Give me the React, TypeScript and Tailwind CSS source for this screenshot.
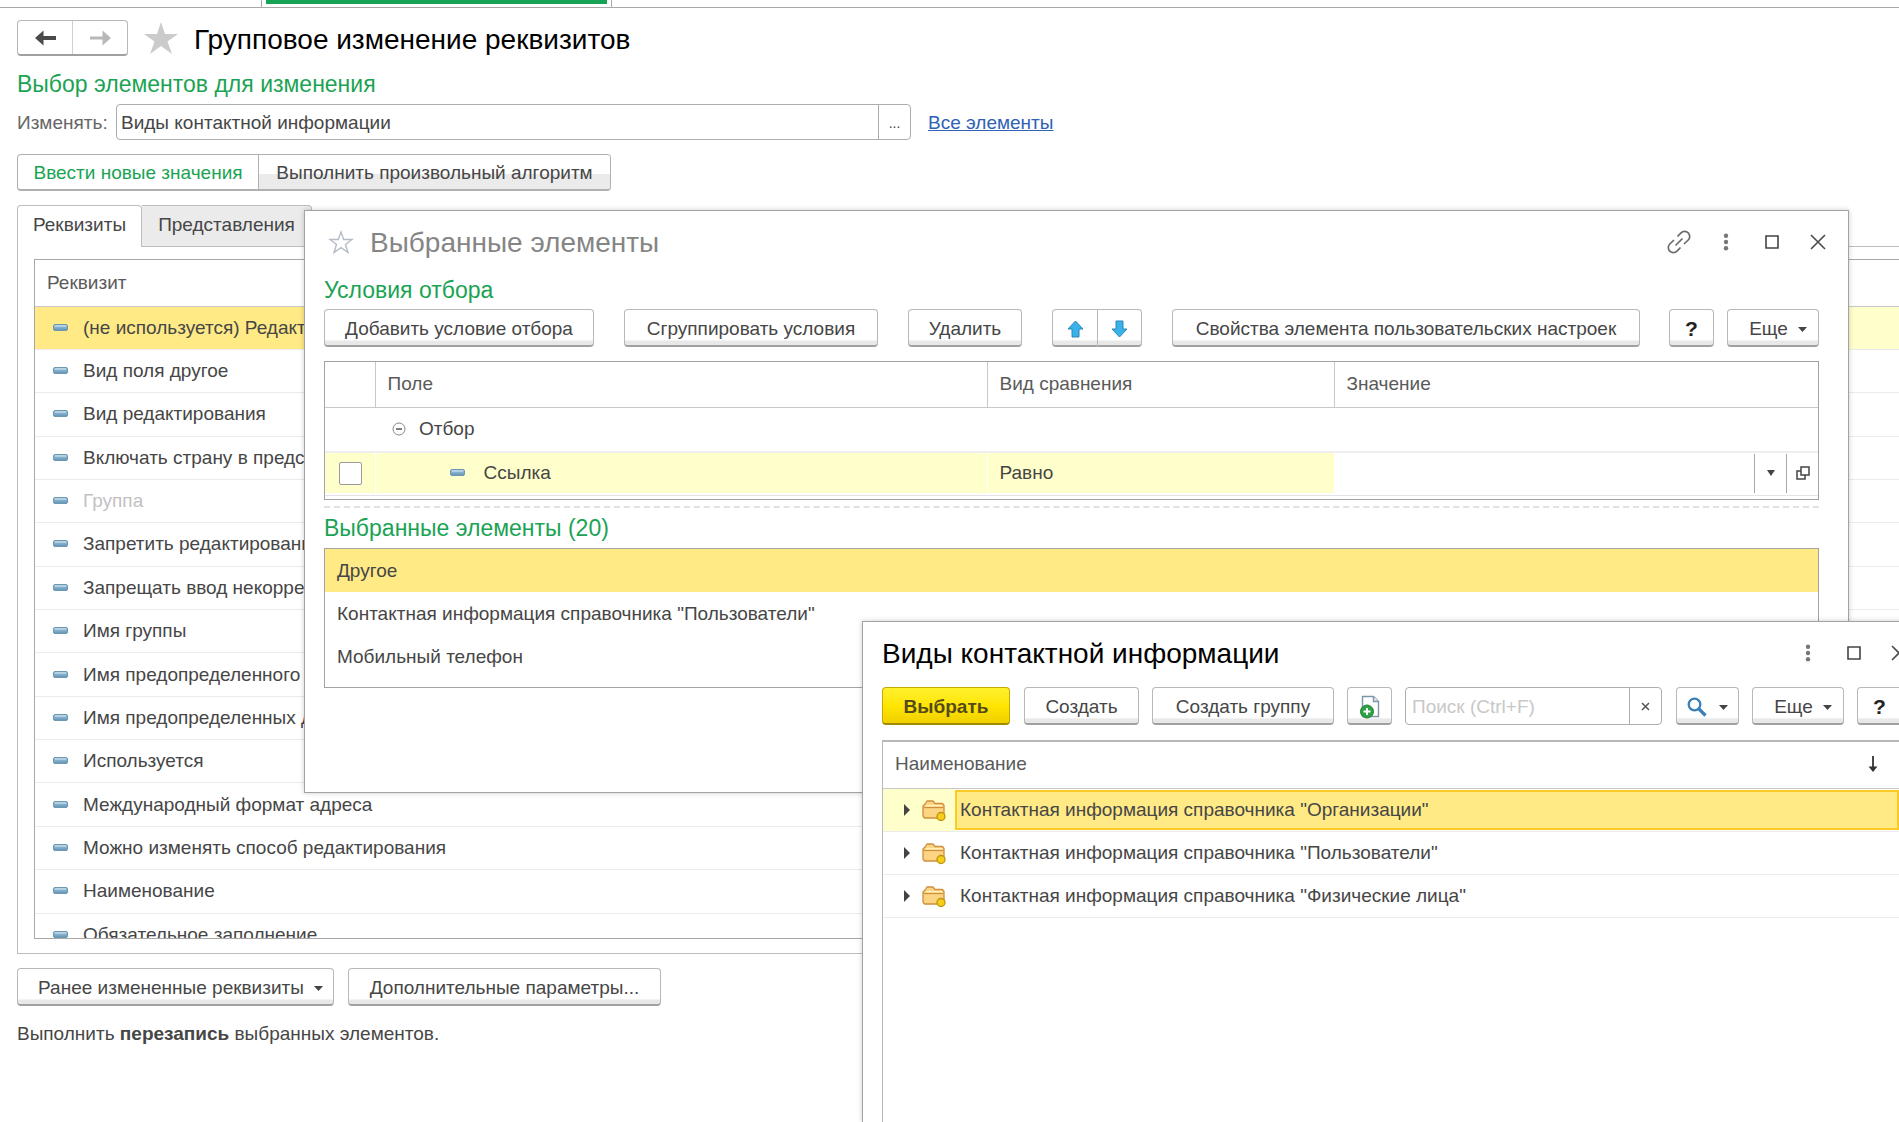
import type { ReactNode } from "react";

function Dash() {
  return (
    <svg width="15" height="8" viewBox="0 0 15 8" className="shrink-0">
      <defs>
        <linearGradient id="dash" x1="0" y1="0" x2="0" y2="1">
          <stop offset="0" stopColor="#a9cbe2" />
          <stop offset="1" stopColor="#5f93b4" />
        </linearGradient>
      </defs>
      <rect x="0.5" y="0.5" width="14" height="6" rx="1.5" fill="url(#dash)" stroke="#6e97b0" />
      <path d="M2 2h11" stroke="#cfe3ef" />
    </svg>
  );
}

function Caret() {
  return (
    <svg width="9" height="5" viewBox="0 0 9 5" className="mt-0.5 shrink-0">
      <path d="M0 0h9L4.500 5z" fill="#444" />
    </svg>
  );
}

function Folder() {
  return (
    <svg width="24" height="24" viewBox="0 0 24 24" className="shrink-0">
      <path d="M1 18V8l2.500-2.500L5 3h6l2 2.500h7.500L22 7.500V18l-1.500 2h-18z" fill="#fcd584" stroke="#cf8f3c" strokeWidth="1.300" strokeLinejoin="round" />
      <path d="M1.500 9.500h20" stroke="#cf8f3c" strokeWidth="1.300" />
      <path d="M3.500 7.700h17" stroke="#fff0b8" strokeWidth="1.500" fill="none" />
      <circle cx="19" cy="18.500" r="4" fill="#f7cd1b" stroke="#bd9215" strokeWidth="1.300" />
    </svg>
  );
}

function Close() {
  return (
    <svg width="16" height="16" viewBox="0 0 16 16">
      <path d="M1 1l14 14M15 1L1 15" stroke="#4a4a4a" strokeWidth="1.600" />
    </svg>
  );
}

function Dots() {
  return (
    <svg width="6" height="18" viewBox="0 0 6 18">
      <circle cx="3" cy="2.800" r="2.200" fill="#777" />
      <circle cx="3" cy="9" r="2.200" fill="#777" />
      <circle cx="3" cy="15.200" r="2.200" fill="#777" />
    </svg>
  );
}

function Maximize() {
  return (
    <svg width="14" height="14" viewBox="0 0 14 14">
      <path d="M1 1h12v12H1z" fill="none" stroke="#444" strokeWidth="1.600" />
    </svg>
  );
}

function Btn({ children, className = "", label }: { children: ReactNode; className?: string; label?: string }) {
  return (
    <button
      type="button"
      aria-label={label}
      className={
        "flex h-[38px] shrink-0 items-center justify-center rounded border border-b-2 border-[#b8b8b8] border-b-[#a0a0a0] bg-linear-to-b from-white from-84% to-[#e8e8e8] to-90% pt-0.5 whitespace-nowrap " +
        className
      }
    >
      {children}
    </button>
  );
}

const attributes = [
  "(не используется) Редактирование только в диалоге",
  "Вид поля другое",
  "Вид редактирования",
  "Включать страну в представление",
  "Группа",
  "Запретить редактирование пользователем",
  "Запрещать ввод некорректных",
  "Имя группы",
  "Имя предопределенного вида",
  "Имя предопределенных данных",
  "Используется",
  "Международный формат адреса",
  "Можно изменять способ редактирования",
  "Наименование",
  "Обязательное заполнение",
];

const kinds = ["Организации", "Пользователи", "Физические лица"];

function MainPage() {
  return (
    <main>
      <div className="flex h-2 border-b border-[#a8a8a8] pl-[261px]">
        <div className="h-[7px] w-[351px] border-x border-[#a8a8a8] px-1">
          <div className="h-1 bg-[#17a355]" />
        </div>
      </div>
      <div className="pl-[17px]">
        <header className="mt-3 flex h-9 items-center">
          <div className="flex h-9 w-[111px] rounded border border-b-2 border-[#b8b8b8] border-b-[#a0a0a0]">
            <button type="button" aria-label="Назад" className="flex flex-1 items-center justify-center border-r border-[#d0d0d0]">
              <svg width="21" height="16" viewBox="0 0 21 16">
                <path d="M0 8l8.500-7.500V6H21v4H8.500v5.500z" fill="#4a4a4a" />
              </svg>
            </button>
            <button type="button" aria-label="Вперед" className="flex flex-1 items-center justify-center">
              <svg width="21" height="16" viewBox="0 0 21 16">
                <path d="M21 8l-8.500-7.500v6H0v3h12.500v6z" fill="#b8b8b8" />
              </svg>
            </button>
          </div>
          <svg width="34" height="32" viewBox="0 0 34 32" className="ml-4">
            <path d="M17 0l4 12h13L23.500 19.500 28 32l-11-8-11 8 4.500-12.500L0 12h13z" fill="#cbcbcb" />
          </svg>
          <h1 className="ml-4 pt-1 text-[28px] text-black">Групповое изменение реквизитов</h1>
        </header>
        <h2 className="mt-2.5 mb-0.5 text-[23px] leading-9 text-[#1ba354]">Выбор элементов для изменения</h2>
        <div className="flex h-9 items-center">
          <label htmlFor="kind" className="w-[99px] pt-0.5 text-[#666]">Изменять:</label>
          <div className="flex h-9 w-[795px] rounded border border-[#adadad]">
            <input id="kind" defaultValue="Виды контактной информации" className="min-w-0 flex-1 px-1 pt-0.5 outline-none" />
            <button type="button" className="w-8 border-l border-[#adadad] pt-0.5 text-sm">...</button>
          </div>
          <a href="#all" className="ml-[17px] pt-0.5 text-[#2f62b5] underline">Все элементы</a>
        </div>
        <div className="mt-[14px] flex h-[37px] w-[594px] overflow-hidden rounded border border-b-2 border-[#b0b0b0]">
          <button type="button" className="w-[241px] border-r border-[#b0b0b0] pt-0.5 text-[#1ba354]">Ввести новые значения</button>
          <button type="button" className="flex-1 bg-linear-to-b from-white from-55% to-[#ebebeb] to-55% pt-0.5">Выполнить произвольный алгоритм</button>
        </div>
        <div role="tablist" className="mt-[14px] flex h-[42px] items-start">
          <button type="button" role="tab" aria-selected="true" className="h-[42px] w-[125px] rounded-t border border-b-0 border-[#bdbdbd] bg-white pb-1">Реквизиты</button>
          <button type="button" role="tab" aria-selected="false" className="h-[42px] w-[170px] rounded-tr border border-l-0 border-[#bdbdbd] bg-[#ebebeb] pb-0.5">Представления</button>
          <div className="h-[42px] flex-1 border-b border-[#bdbdbd]" />
        </div>
        <div className="border-b border-l border-[#bdbdbd] pt-3 pb-[14px] pl-4">
          <div className="h-[680px] overflow-hidden border border-r-0 border-[#a8a8a8]">
            <table className="h-[697px] w-full table-fixed border-collapse text-left">
              <thead>
                <tr className="h-[46px]">
                  <th className="w-[60%] border-b border-[#c8c8c8] pl-3 font-normal text-[#5a5a5a]">Реквизит</th>
                  <th className="border-b border-[#c8c8c8]" aria-label="Новое значение" />
                </tr>
              </thead>
              <tbody>
                {attributes.map((name, i) => (
                  <tr key={name} className="border-b border-[#ebebeb]">
                    <td className={i === 0 ? "bg-[#ffea86] p-0" : i === 4 ? "p-0 text-[#c4c0c4]" : "p-0"}>
                      <div className="flex items-center gap-[15px] pl-[18px] whitespace-nowrap">
                        <Dash />
                        {name}
                      </div>
                    </td>
                    <td className={i === 0 ? "bg-[#ffffcc] p-0" : "p-0"} />
                  </tr>
                ))}
              </tbody>
            </table>
          </div>
        </div>
        <div className="mt-[14px] flex gap-[14px]">
          <Btn className="w-[317px] gap-2.5 pl-2.5">Ранее измененные реквизиты <Caret /></Btn>
          <Btn className="w-[313px]">Дополнительные параметры...</Btn>
        </div>
        <p className="mt-3 leading-8">Выполнить <b>перезапись</b> выбранных элементов.</p>
      </div>
    </main>
  );
}

function SelectedDialog() {
  return (
    <section role="dialog" aria-label="Выбранные элементы" className="absolute top-[210px] right-[50px] left-[304px] h-[583px] border border-[#a3a3a3] bg-white pr-[29px] pl-[19px] shadow-[0_0_5px_rgba(0,0,0,0.2)]">
      <header className="flex h-[61px] items-center">
        <svg width="26" height="24" viewBox="0 0 26 24" className="ml-1">
          <path d="M13 2l2.700 7.500H24l-6.500 5 2.500 8-7-4.800-7 4.800 2.500-8L2 9.500h8.300z" fill="none" stroke="#b5bcc6" strokeWidth="1.400" />
        </svg>
        <h2 className="ml-4 flex-1 pt-0.5 text-[28px] text-[#858585]">Выбранные элементы</h2>
        <div className="-mr-[7px] flex items-center">
          <button type="button" aria-label="Ссылка">
            <svg width="24" height="24" viewBox="0 0 24 24" fill="none" stroke="#6a6a6a" strokeWidth="1.700">
              <path d="M10.500 6.500l3.500-3.700a5 5 0 0 1 7.200 7.200L17 14M13.500 17.500L10 21.200A5 5 0 0 1 2.800 14L7 10M8.500 15.500l7-7" />
            </svg>
          </button>
          <button type="button" aria-label="Меню" className="ml-8"><Dots /></button>
          <button type="button" aria-label="Развернуть" className="ml-9"><Maximize /></button>
          <button type="button" aria-label="Закрыть" className="ml-[31px]"><Close /></button>
        </div>
      </header>
      <h3 className="mb-px text-[23px] leading-9 text-[#1ba354]">Условия отбора</h3>
      <div className="flex">
        <Btn className="w-[270px]">Добавить условие отбора</Btn>
        <Btn className="ml-[30px] w-[254px]">Сгруппировать условия</Btn>
        <Btn className="ml-[30px] w-[114px]">Удалить</Btn>
        <Btn className="ml-[30px] w-[46px] rounded-r-none" label="Вверх">
          <svg width="17" height="18" viewBox="0 0 17 18"><path d="M8.500 1l7.500 8h-4v8H5V9H1z" fill="#38b3ea" stroke="#2e84b5" /></svg>
        </Btn>
        <Btn className="w-[44px] rounded-l-none border-l-0" label="Вниз">
          <svg width="17" height="18" viewBox="0 0 17 18"><path d="M8.500 17L1 9h4V1h7v8h4z" fill="#38b3ea" stroke="#2e84b5" /></svg>
        </Btn>
        <Btn className="ml-[30px] w-[468px]">Свойства элемента пользовательских настроек</Btn>
        <Btn className="ml-auto w-[45px] text-[21px] font-bold text-[#222]">?</Btn>
        <Btn className="ml-[13px] w-[92px] gap-2.5 pl-2.5">Еще <Caret /></Btn>
      </div>
      <div className="mt-[14px] h-[139px] border border-[#a3a3a3]">
        <table className="w-full table-fixed border-collapse text-left">
          <colgroup>
            <col className="w-[50px]" />
            <col className="w-[612px]" />
            <col className="w-[347px]" />
            <col />
          </colgroup>
          <thead>
            <tr className="h-[45px] border-b border-[#c8c8c8] text-[#5a5a5a]">
              <th className="border-r border-[#c8c8c8]" aria-label="Отметка" />
              <th className="border-r border-[#c8c8c8] pl-3 font-normal">Поле</th>
              <th className="border-r border-[#c8c8c8] pl-3 font-normal">Вид сравнения</th>
              <th className="pl-3 font-normal">Значение</th>
            </tr>
          </thead>
          <tbody>
            <tr className="h-[45px] border-b-2 border-[#efefef]">
              <td />
              <td colSpan={3} className="p-0">
                <div className="flex items-center gap-[13px] pl-[17px]">
                  <svg width="14" height="14" viewBox="0 0 14 14"><circle cx="7" cy="7" r="6" fill="none" stroke="#888" /><path d="M4 7h6" stroke="#555" strokeWidth="1.500" /></svg>
                  Отбор
                </div>
              </td>
            </tr>
            <tr className="h-[41px] bg-[#ffffcc]">
              <td className="border-r border-white p-0">
                <input type="checkbox" aria-label="Использовать условие" className="ml-[14px] block h-[23px] w-[23px] appearance-none rounded-xs border border-[#9a9a9a] bg-white" />
              </td>
              <td className="border-r border-white p-0">
                <div className="flex items-center gap-[19px] pl-[74px]"><Dash />Ссылка</div>
              </td>
              <td className="border-r border-white p-0 pl-3">Равно</td>
              <td className="bg-white p-0">
                <div className="flex h-[39px]">
                  <input aria-label="Значение" className="min-w-0 flex-1 px-3 outline-none" />
                  <button type="button" aria-label="Список" className="flex w-8 items-center justify-center border-l border-[#a8a8a8]">
                    <svg width="8" height="6" viewBox="0 0 8 6"><path d="M0 0h8L4 6z" fill="#444" /></svg>
                  </button>
                  <button type="button" aria-label="Открыть" className="flex w-8 items-center justify-center border-l border-[#a8a8a8]">
                    <svg width="14" height="14" viewBox="0 0 14 14" fill="none" stroke="#444" strokeWidth="1.500"><path d="M5 1h8v8H5zM5 5H1v8h8V9" /></svg>
                  </button>
                </div>
              </td>
            </tr>
          </tbody>
        </table>
        <div className="mt-0.5 border-t border-[#e4e4e4]" />
      </div>
      <div className="mt-1.5 border-t-2 border-dashed border-[#e2e2e2]" />
      <h3 className="mt-0.5 text-[23px] leading-9 text-[#1ba354]">Выбранные элементы (20)</h3>
      <ul className="mt-0.5 h-[140px] border border-[#a3a3a3]">
        <li className="flex h-[43px] items-center bg-[#ffea86] pl-3">Другое</li>
        <li className="flex h-[43px] items-center pl-3">Контактная информация справочника "Пользователи"</li>
        <li className="flex h-[43px] items-center pl-3">Мобильный телефон</li>
      </ul>
    </section>
  );
}

function KindsDialog() {
  return (
    <section role="dialog" aria-label="Виды контактной информации" className="absolute top-[621px] -right-5 bottom-0 left-[862px] flex flex-col border-t border-l border-[#a3a3a3] bg-white pl-[19px] shadow-[0_0_5px_rgba(0,0,0,0.2)]">
      <header className="flex h-[65px] shrink-0 items-center pr-3 pb-1">
        <h2 className="flex-1 pt-0.5 text-[28px] text-black">Виды контактной информации</h2>
        <button type="button" aria-label="Меню"><Dots /></button>
        <button type="button" aria-label="Развернуть" className="ml-9"><Maximize /></button>
        <button type="button" aria-label="Закрыть" className="ml-[30px]"><Close /></button>
      </header>
      <div className="flex shrink-0">
        <button type="button" className="h-[38px] w-[128px] rounded border border-b-2 border-[#c5a800] border-b-[#a08a00] bg-linear-to-b from-[#fff02a] via-[#ffe600] to-[#f0cf00] pt-0.5 font-bold text-[#544a1c]">Выбрать</button>
        <Btn className="ml-[14px] w-[115px]">Создать</Btn>
        <Btn className="ml-[13px] w-[182px]">Создать группу</Btn>
        <Btn className="ml-[13px] w-[45px]" label="Создать копированием">
          <svg width="22" height="24" viewBox="0 0 22 24">
            <path d="M3.500 1.500h11l5 5v15h-16z" fill="#fff" stroke="#7d95a8" strokeWidth="1.400" />
            <path d="M14.500 1.500v5h5" fill="#e6eef4" stroke="#7d95a8" strokeWidth="1.400" />
            <circle cx="8" cy="16.500" r="6.500" fill="#2ca043" stroke="#1d8534" />
            <path d="M4.500 16.500h7M8 13v7" stroke="#fff" strokeWidth="2" />
          </svg>
        </Btn>
        <div className="ml-[13px] flex h-[38px] min-w-0 flex-1 rounded border border-[#adadad]">
          <input aria-label="Поиск" placeholder="Поиск (Ctrl+F)" className="min-w-0 flex-1 pt-0.5 pl-1.5 outline-none placeholder:text-[#c8c8c8]" />
          <button type="button" aria-label="Очистить" className="flex w-8 items-center justify-center border-l border-[#adadad]">
            <svg width="9" height="9" viewBox="0 0 9 9"><path d="M1 1l7 7M8 1L1 8" stroke="#555" strokeWidth="1.500" /></svg>
          </button>
        </div>
        <Btn className="ml-[14px] w-[63px] gap-3" label="Найти">
          <svg width="20" height="20" viewBox="0 0 20 20" fill="none" stroke="#3a80b8"><circle cx="7.500" cy="7.500" r="5.800" strokeWidth="2.300" /><path d="M12 12l6.500 6.500" strokeWidth="3.200" /></svg>
          <Caret />
        </Btn>
        <Btn className="ml-[13px] w-[92px] gap-2.5 pl-2.5">Еще <Caret /></Btn>
        <Btn className="mr-[17px] ml-[13px] w-[45px] text-[21px] font-bold text-[#222]">?</Btn>
      </div>
      <div className="mt-[15px] flex-1 border-t-2 border-l border-[#b8b8b8] pr-5">
        <table className="w-full border-collapse text-left">
          <thead>
            <tr className="h-[46px] border-b border-[#c8c8c8] text-[#5a5a5a]">
              <th colSpan={2} className="p-0 pb-0.5 font-normal">
                <div className="flex items-center justify-between pr-[21px] pl-3">
                  Наименование
                  <svg width="10" height="16" viewBox="0 0 10 16"><path d="M5 0v12" stroke="#333" strokeWidth="1.800" /><path d="M0.500 10.500h9L5 16z" fill="#333" /></svg>
                </div>
              </th>
            </tr>
          </thead>
          <tbody>
            {kinds.map((kind, i) => (
              <tr key={kind} className="h-[43px] border-b border-[#ebebeb]">
                <td className={i === 0 ? "w-[72px] bg-[#ffffcc] p-0" : "w-[72px] p-0"}>
                  <div className="flex items-center gap-3 pl-[21px]">
                    <svg width="6" height="12" viewBox="0 0 6 12"><path d="M0 0l6 6-6 6z" fill="#444" /></svg>
                    <Folder />
                  </div>
                </td>
                <td className="p-0">
                  <div className={i === 0 ? "flex h-10 items-center border-2 border-[#fcca24] bg-[#ffea86] pl-[3px]" : "flex h-10 items-center pl-[5px]"}>
                    Контактная информация справочника "{kind}"
                  </div>
                </td>
              </tr>
            ))}
          </tbody>
        </table>
      </div>
    </section>
  );
}

export default function App() {
  return (
    <div className="relative min-h-screen overflow-hidden bg-white font-['Liberation_Sans',Arial,sans-serif] text-[19px] leading-6 text-[#464646]">
      <MainPage />
      <SelectedDialog />
      <KindsDialog />
    </div>
  );
}
